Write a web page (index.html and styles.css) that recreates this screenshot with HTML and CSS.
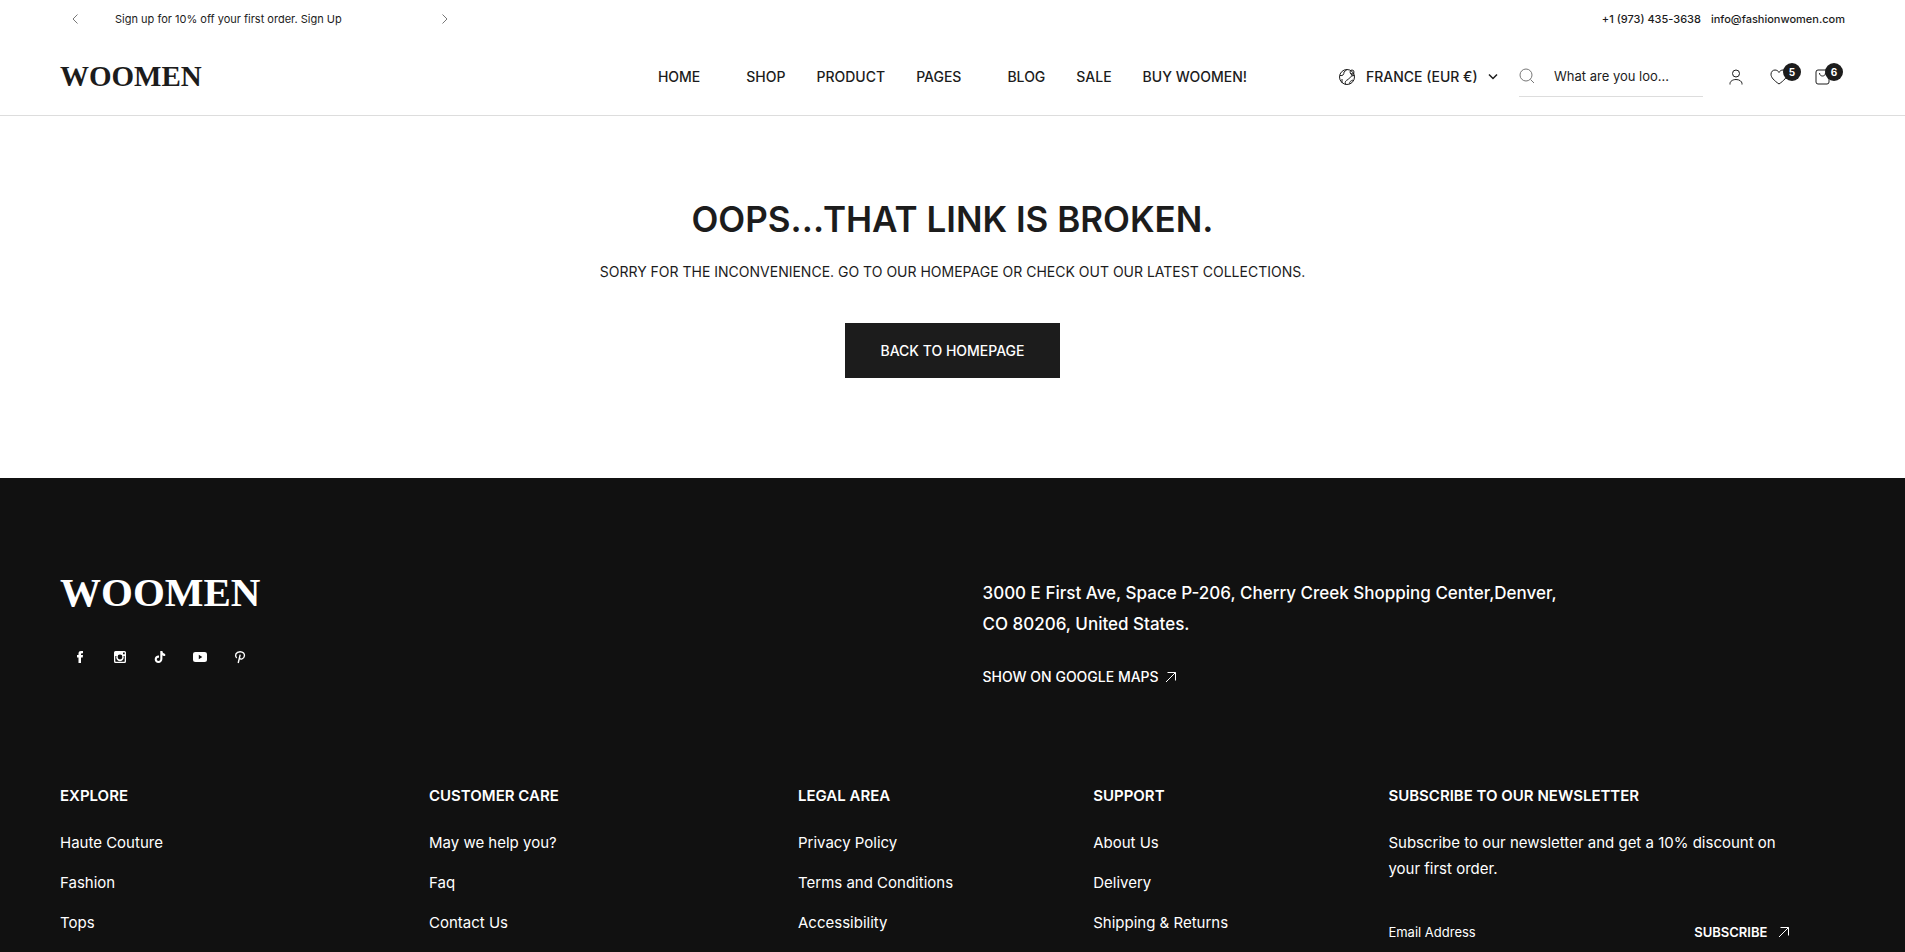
FILE: index.html
```html
<!DOCTYPE html>
<html lang="en">
<head>
  <meta charset="UTF-8">
  <title>Woomen - 404</title>
  <link rel="stylesheet" href="styles.css">
</head>
<body>

  <header>
    <div class="topbar">
      <div class="announce">
        <button class="arrow" aria-label="Previous"><svg width="8" height="12" viewBox="0 0 8 12"><path d="M6.500 1.500 2 6l4.500 4.500"/></svg></button>
        <p>Sign up for 10% off your first order. <a href="#">Sign Up</a></p>
        <button class="arrow" aria-label="Next"><svg width="8" height="12" viewBox="0 0 8 12"><path d="M1.500 1.500 6 6 1.500 10.500"/></svg></button>
      </div>
      <div class="contact">
        <a href="tel:+19734353638">+1 (973) 435-3638</a>
        <a href="mailto:info@fashionwomen.com">info@fashionwomen.com</a>
      </div>
    </div>

    <div class="navbar">
      <a class="logo" href="#">WOOMEN</a>
      <nav>
        <a class="wide" href="#">HOME</a>
        <a href="#">SHOP</a>
        <a href="#">PRODUCT</a>
        <a class="wide" href="#">PAGES</a>
        <a href="#">BLOG</a>
        <a href="#">SALE</a>
        <a href="#">BUY WOOMEN!</a>
      </nav>
      <div class="tools">
        <label class="country">
          <svg width="18" height="18" viewBox="0 0 18 18"><circle cx="9" cy="9" r="7.500"/><circle cx="14" cy="4" r="2"/><path d="M2 7.500c3 .5 4-1 4-3.500l3-2.500M4 15v-4M7.500 16.500c-1-3 .5-4 2.500-5s2-4 6.500-4M12 16c-1-2 .5-3 3-4M12.500 5 14 7.500l2-2"/></svg>
          <select aria-label="Country"><option>FRANCE (EUR €)</option></select>
          <svg width="10" height="7" viewBox="0 0 10 7"><path class="bold" d="M1 1.500 5 5.500l4-4"/></svg>
        </label>
        <label class="search">
          <svg width="16" height="16" viewBox="0 0 16 16"><circle cx="7" cy="7" r="6"/><path d="m11.500 11.500 3.500 3.500"/></svg>
          <input type="text" aria-label="Search" placeholder="What are you loo...">
        </label>
        <a class="tool" href="#" aria-label="Account"><svg width="14" height="16" viewBox="0 0 14 16"><circle cx="7" cy="4.500" r="3.500"/><path d="M1 15.500v-1c0-2 2.500-4 6-4s6 2 6 4v1"/></svg></a>
        <a class="tool" href="#" aria-label="Wishlist"><svg width="18" height="16" viewBox="0 0 18 16"><path d="M9 15C4 11.500 1 8.500 1 5.200 1 2.800 2.800 1 5 1c1.700 0 3.200.9 4 2.500C9.800 1.900 11.300 1 13 1c2.200 0 4 1.800 4 4.200 0 3.300-3 6.300-8 9.800z"/></svg><span class="badge">5</span></a>
        <a class="tool" href="#" aria-label="Cart"><svg width="15" height="16" viewBox="0 0 15 16"><rect x="1" y="1" width="13" height="14" rx="2"/><path d="M4.500 4c0 4 6 4 6 0"/></svg><span class="badge">6</span></a>
      </div>
    </div>
  </header>

  <main>
    <h1>OOPS...THAT LINK IS BROKEN.</h1>
    <p>SORRY FOR THE INCONVENIENCE. GO TO OUR HOMEPAGE OR CHECK OUT OUR LATEST COLLECTIONS.</p>
    <a class="btn" href="#">BACK TO HOMEPAGE</a>
  </main>

  <footer>
    <div class="footer-top">
      <div>
        <a class="logo" href="#">WOOMEN</a>
        <div class="social">
          <a href="#" aria-label="Facebook"><svg width="14" height="14" viewBox="0 0 14 14"><path d="M5.500 13V7.500H4V5h1.500V3.500C5.500 1.800 6.500 1 8 1h2v2.200H8.800c-.5 0-.8.3-.8.8v1h2l-.3 2.500H8V13z"/></svg></a>
          <a href="#" aria-label="Instagram"><svg width="14" height="14" viewBox="0 0 14 14"><path fill-rule="evenodd" d="M2.500 1h9A1.500 1.500 0 0 1 13 2.500v9a1.500 1.500 0 0 1-1.500 1.500h-9A1.500 1.500 0 0 1 1 11.500v-9A1.500 1.500 0 0 1 2.500 1zM10 2.400v1.800h1.700V2.400zM2.300 6v5.200c0 .3.200.5.500.5h8.400c.3 0 .5-.2.500-.5V6h-1.200a3.800 3.800 0 1 1-7 0zM7 4.600a2.400 2.400 0 1 0 0 4.800 2.400 2.400 0 0 0 0-4.800z"/></svg></a>
          <a href="#" aria-label="TikTok"><svg width="14" height="14" viewBox="0 0 14 14"><path d="M7.300 1h2.100c.2 1.700 1.200 2.700 2.800 2.900v2.200c-1.100 0-2-.3-2.800-.9v3.900c0 2.400-1.700 3.900-3.900 3.900S1.700 11.300 1.700 9.200c0-2.300 1.900-3.900 4.300-3.700v2.200c-1.200-.2-2.200.4-2.200 1.500 0 1 .7 1.700 1.700 1.700 1.100 0 1.800-.7 1.800-1.900z"/></svg></a>
          <a href="#" aria-label="YouTube"><svg width="14" height="14" viewBox="0 0 14 14"><path fill-rule="evenodd" d="M2.500 2h9C13.200 2 14 2.800 14 4.500v5c0 1.700-.8 2.500-2.500 2.500h-9C.8 12 0 11.200 0 9.500v-5C0 2.800.8 2 2.500 2zM5.800 4.800v4.400L9.300 7z"/></svg></a>
          <a href="#" aria-label="Pinterest"><svg width="14" height="14" viewBox="0 0 14 14"><path class="stroke" d="M3.700 7.900C1.300 5.500 3 1.700 7.100 1.700c3 0 4.700 2 4.300 4.300-.6 3.300-4 3.900-4.900 2M7.200 4.600 5.200 13"/></svg></a>
        </div>
      </div>
      <div class="address">
        <p>3000 E First Ave, Space P-206, Cherry Creek Shopping Center,Denver,<br>CO 80206, United States.</p>
        <a class="map" href="#">SHOW ON GOOGLE MAPS <svg width="12" height="12" viewBox="0 0 12 12"><path d="M1 11 10.500 1.500M2.500 1.500h8v8"/></svg></a>
      </div>
    </div>

    <div class="footer-cols">
      <div>
        <h2>EXPLORE</h2>
        <ul>
          <li><a href="#">Haute Couture</a></li>
          <li><a href="#">Fashion</a></li>
          <li><a href="#">Tops</a></li>
        </ul>
      </div>
      <div>
        <h2>CUSTOMER CARE</h2>
        <ul>
          <li><a href="#">May we help you?</a></li>
          <li><a href="#">Faq</a></li>
          <li><a href="#">Contact Us</a></li>
        </ul>
      </div>
      <div>
        <h2>LEGAL AREA</h2>
        <ul>
          <li><a href="#">Privacy Policy</a></li>
          <li><a href="#">Terms and Conditions</a></li>
          <li><a href="#">Accessibility</a></li>
        </ul>
      </div>
      <div>
        <h2>SUPPORT</h2>
        <ul>
          <li><a href="#">About Us</a></li>
          <li><a href="#">Delivery</a></li>
          <li><a href="#">Shipping &amp; Returns</a></li>
        </ul>
      </div>
      <div class="newsletter">
        <h2>SUBSCRIBE TO OUR NEWSLETTER</h2>
        <p>Subscribe to our newsletter and get a 10% discount on your first order.</p>
        <form>
          <input type="email" aria-label="Email Address" placeholder="Email Address">
          <button type="button">SUBSCRIBE <svg width="12" height="12" viewBox="0 0 12 12"><path d="M1 11 10.500 1.500M2.500 1.500h8v8"/></svg></button>
        </form>
      </div>
    </div>
  </footer>

</body>
</html>
```

FILE: styles.css
```css
* {
  box-sizing: border-box;
}
body {
  margin: 0;
  font-family: Inter, sans-serif;
  font-size: 14px;
  color: #1c1c1c;
  background: #fff;
}
a {
  color: inherit;
  text-decoration: none;
}
h1, h2, p, ul {
  margin: 0;
  padding: 0;
}
ul {
  list-style: none;
}
input, button, select {
  font: inherit;
  color: inherit;
  background: none;
  border: none;
  padding: 0;
  outline: none;
}
button {
  cursor: pointer;
}
svg {
  display: block;
  flex-shrink: 0;
  fill: none;
  stroke: currentColor;
}
.logo {
  font-family: "Liberation Serif", serif;
  font-weight: bold;
}

/* header */
header {
  border-bottom: 1px solid #ddd;
}
.topbar {
  display: flex;
  justify-content: space-between;
  align-items: center;
  height: 38px;
  padding: 0 60px;
  font-size: 11px;
}
.announce {
  display: flex;
  align-items: center;
  width: 400px;
  padding: 0 11px;
}
.announce p {
  flex: 1;
  padding-left: 36px;
}
.arrow {
  color: #777;
}
.contact {
  display: flex;
  gap: 10px;
  font-weight: 500;
}
.navbar {
  display: grid;
  grid-template-columns: 1fr auto 1fr;
  align-items: center;
  height: 77px;
  padding: 0 60px;
}
.navbar .logo {
  font-size: 29px;
}
nav {
  display: flex;
  gap: 31px;
  font-weight: 500;
}
.wide {
  padding-right: 15px;
}
.tools {
  display: flex;
  justify-content: flex-end;
  align-items: center;
}
.country {
  display: flex;
  align-items: center;
  gap: 10px;
  font-weight: 500;
}
.country select {
  appearance: none;
}
.country .bold {
  stroke-width: 1.5;
}
.search {
  display: flex;
  align-items: center;
  gap: 19px;
  width: 184px;
  height: 40px;
  margin: 0 26px 0 21px;
  border-bottom: 1px solid #ddd;
}
.search input {
  width: 100%;
  font-size: 13px;
}
.search svg {
  color: #777;
}
input::placeholder {
  color: inherit;
  opacity: 1;
}
.tool {
  position: relative;
  margin-right: 27px;
}
.tool:last-child {
  margin-right: 15px;
}
.badge {
  position: absolute;
  right: -13px;
  top: -6px;
  width: 18px;
  height: 18px;
  border-radius: 50%;
  background: #1c1c1c;
  color: #fff;
  font-size: 10px;
  font-weight: bold;
  line-height: 18px;
  text-align: center;
}

/* 404 */
main {
  padding: 75px 20px 100px;
  text-align: center;
}
h1 {
  font-size: 35px;
  font-weight: 600;
  line-height: 56px;
}
main p {
  margin: 12px 0 38px;
  line-height: 26px;
}
.btn {
  display: inline-block;
  padding: 0 35px;
  background: #1c1c1c;
  color: #fff;
  font-size: 14px;
  font-weight: 500;
  line-height: 55px;
}

/* footer */
footer {
  background: #111;
  color: #fff;
  padding: 100px 0 60px 60px;
}
.footer-top {
  display: grid;
  grid-template-columns: 1fr 1fr;
  height: 205px;
}
.footer-top .logo {
  font-size: 41px;
  line-height: 28px;
}
.social {
  display: flex;
  gap: 26px;
  padding: 41px 13px;
}
.social svg {
  fill: currentColor;
  stroke: none;
}
.social .stroke {
  fill: none;
  stroke: currentColor;
  stroke-width: 1.4;
}
.address {
  font-weight: 500;
}
.address p {
  font-size: 17px;
  line-height: 31px;
}
.map {
  display: flex;
  align-items: center;
  gap: 6px;
  margin-top: 28px;
}
.footer-cols {
  display: grid;
  grid-template-columns: 20fr 20fr 16fr 16fr 28fr;
  font-size: 15px;
}
h2 {
  margin-bottom: 21px;
  font-size: 15px;
  font-weight: 600;
  line-height: 26px;
}
li {
  line-height: 26px;
  margin-bottom: 14px;
}
.newsletter p {
  max-width: 400px;
  line-height: 26px;
}
form {
  display: flex;
  justify-content: space-between;
  max-width: 402px;
  margin-top: 42px;
  font-size: 13px;
}
form button {
  display: flex;
  align-items: center;
  gap: 11px;
  font-weight: 600;
}
```
